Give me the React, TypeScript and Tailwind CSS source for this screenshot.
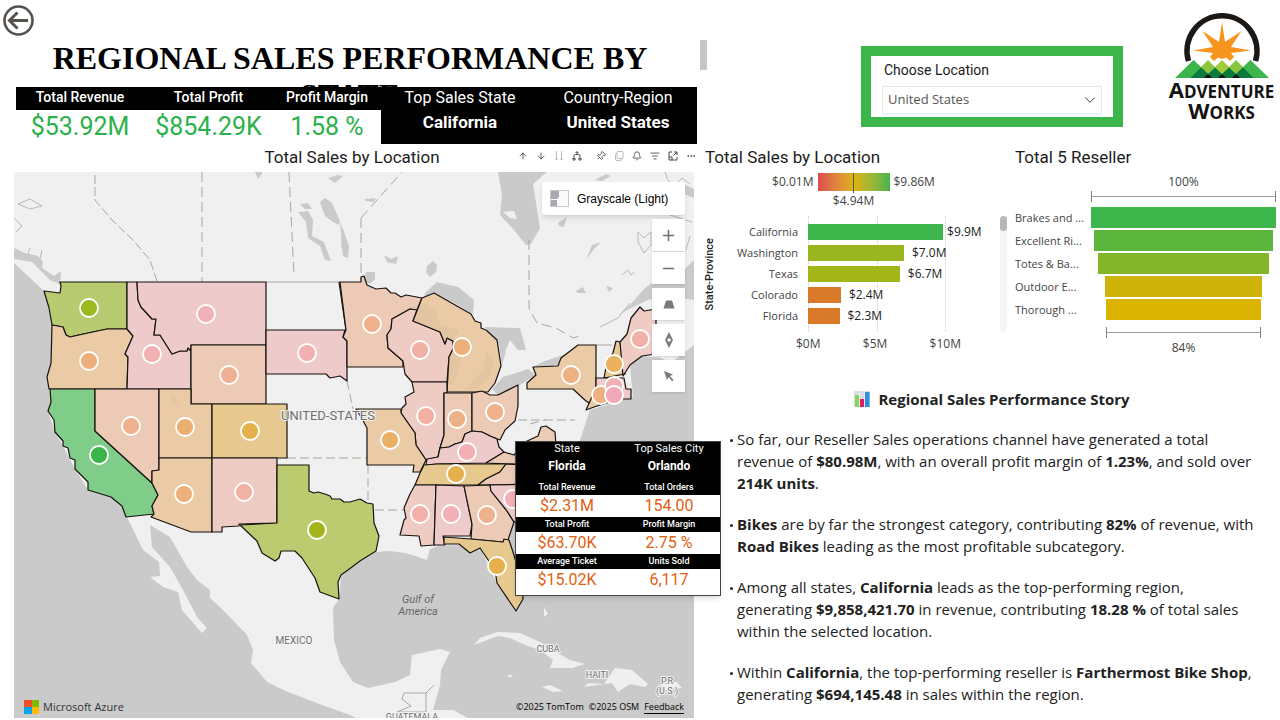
import React from "react";
import {
  ArrowDown,
  ArrowUp,
  Bell,
  ChevronDown,
  Copy,
  Ellipsis,
  Expand,
  ListFilter,
  Minus,
  Network,
  Pin,
  Plus,
} from "lucide-react";

type Region = { name: string; d: string; fill: string; dot?: string; x?: number; y?: number };

const PINK = "#efcaca";
const ROSE = "#eecbc3";
const PEACH = "#eccab5";
const SAND = "#ebcba6";
const GOLD = "#e7c98f";

const regions: Region[] = [
  { name: "Washington", fill: "#b8cb70", dot: "#9cb91f", x: 89, y: 308, d: "44,291 60,293 61,286 60,282 127,282 127,329 107,329 88,333 70,337 66,335 63,327 52,325 49,308" },
  { name: "Oregon", fill: SAND, dot: "#ecb07c", x: 89, y: 361, d: "52,325 63,327 66,335 70,337 88,333 107,329 127,329 133,336 125,354 128,357 127,389 49,389 47,377 51,363" },
  { name: "Idaho", fill: PINK, dot: "#f2b0b2", x: 152, y: 354, d: "127,282 137,282 138,300 141,307 152,319 156,319 154,335 160,335 172,354 180,351 187,351 188,348 191,351 191,389 127,389 128,357 125,354 133,336 127,329" },
  { name: "Montana", fill: PINK, dot: "#f2b0b8", x: 206, y: 314, d: "137,282 266,282 266,345 191,345 191,351 188,348 187,351 180,351 172,354 160,335 154,335 156,319 152,319 141,307 138,300" },
  { name: "Wyoming", fill: PEACH, dot: "#efb093", x: 229, y: 375, d: "191,345 266,345 266,404 191,404" },
  { name: "South Dakota", fill: PINK, dot: "#f2b0b0", x: 307, y: 353, d: "266,330 345,330 343,337 347,341 347,381 340,376 330,378 326,374 266,374" },
  { name: "California", fill: "#80cd8a", dot: "#3ab54a", x: 99, y: 455, d: "50,389 95,389 95,431 152,483 158,495 152,506 154,514 126,517 122,506 111,497 88,490 88,482 75,469 75,460 70,458 68,448 63,446 63,441 55,432 54,420 48,411 51,402" },
  { name: "Nevada", fill: PEACH, dot: "#efb08c", x: 131, y: 426, d: "95,389 159,389 159,470 152,471 152,483 95,431" },
  { name: "Utah", fill: SAND, dot: "#ebb070", x: 185, y: 427, d: "159,389 191,389 191,404 212,404 212,458 159,458" },
  { name: "Colorado", fill: GOLD, dot: "#e4b14c", x: 250, y: 431, d: "212,404 287,404 287,458 212,458" },
  { name: "Arizona", fill: SAND, dot: "#ecb07c", x: 184, y: 494, d: "159,458 212,458 212,532 191,532 151,517 154,514 152,506 158,495 152,483 152,471 159,470" },
  { name: "New Mexico", fill: ROSE, dot: "#f1b1a5", x: 244, y: 492, d: "212,458 277,458 277,523 239,524 239,526 222,527 222,532 212,532" },
  { name: "Texas", fill: "#bccb70", dot: "#a4b51c", x: 317, y: 530, d: "277,465 309,465 309,491 314,493 318,492 325,494 330,496 332,499 340,499 344,502 350,502 360,499 367,503 373,504 374,523 379,536 376,551 360,561 348,570 341,575 338,582 339,599 320,592 315,578 302,558 295,551 281,551 279,558 275,561 262,553 257,541 240,525 277,523" },
  { name: "Minnesota", fill: PEACH, dot: "#efb08c", x: 372, y: 324, d: "340,282 361,282 361,277 364,276 367,285 376,289 386,288 391,293 395,293 401,297 406,295 422,298 417,310 410,309 392,319 391,329 387,335 388,348 403,361 403,367 347,367 347,341 343,337 346,330" },
  { name: "Wisconsin", fill: ROSE, dot: "#f1b0a5", x: 420, y: 350, d: "417,310 410,309 392,319 391,329 387,335 388,348 403,361 405,374 412,382 447,382 449,357 453,349 453,341 447,338 445,344 440,332 413,321" },
  { name: "Michigan", fill: SAND, dot: "#edb07b", x: 462, y: 347, d: "422,298 434,293 471,314 475,321 481,323 481,328 486,330 497,340 501,366 495,383 488,392 447,392 449,357 453,349 453,341 447,338 445,344 440,332 413,321" },
  { name: "Illinois", fill: ROSE, dot: "#f1b0a0", x: 426, y: 416, d: "412,382 447,382 447,393 444,393 444,435 440,448 438,457 426,460 416,445 415,433 401,413 402,408 406,404 405,397 414,392" },
  { name: "Indiana", fill: PEACH, dot: "#eeb087", x: 457, y: 419, d: "444,393 472,393 472,431 465,434 462,442 455,444 449,447 440,448 444,435" },
  { name: "Ohio", fill: PEACH, dot: "#efb08c", x: 495, y: 412, d: "472,393 482,391 490,395 498,395 518,385 518,406 515,421 505,430 500,440 490,436 482,432 472,431" },
  { name: "Kentucky", fill: PINK, dot: "#f2b0b4", x: 467, y: 452, d: "472,431 482,432 490,436 497,439 499,447 504,452 486,463 437,464 426,465 427,459 438,457 440,448 449,447 455,444 462,442 465,434" },
  { name: "Virginia", fill: PEACH, d: "486,463 504,452 514,455 525,442 538,436 541,427 546,426 555,432 556,445 556,466" },
  { name: "Tennessee", fill: GOLD, dot: "#e4b14c", x: 456, y: 474, d: "424,465 437,464 506,464 500,472 486,479 478,485 415,485 420,473" },
  { name: "North Carolina", fill: PEACH, d: "506,464 556,466 556,484 478,485 486,479 500,472" },
  { name: "Mississippi", fill: ROSE, dot: "#f2b0a8", x: 420, y: 514, d: "415,485 436,485 434,545 421,546 419,536 400,535 404,520 406,518 404,508 410,494" },
  { name: "Alabama", fill: PINK, dot: "#f2b0b6", x: 451, y: 514, d: "436,485 464,486 468,505 472,524 470,536 443,536 445,545 434,545" },
  { name: "Georgia", fill: PEACH, dot: "#efb08c", x: 487, y: 515, d: "464,486 490,485 491,491 507,511 514,522 508,540 503,542 471,539 472,524 468,505" },
  { name: "South Carolina", fill: PINK, dot: "#f2b0b6", x: 513, y: 499, d: "490,485 540,484 540,505 514,522 507,511 491,491" },
  { name: "Florida", fill: GOLD, dot: "#e8b04c", x: 497, y: 566, d: "444,537 471,539 503,542 504,539 509,540 513,552 523,585 523,599 516,611 497,583 495,570 480,548 470,553 459,544 444,544" },
  { name: "Missouri", fill: SAND, dot: "#e9b068", x: 390, y: 440, d: "356,409 401,409 401,413 415,433 416,445 426,460 420,472 413,472 414,465 367,465 367,428 361,417" },
  { name: "New York", fill: SAND, dot: "#eeb080", x: 571, y: 375, d: "527,389 527,383 536,375 533,367 558,366 561,358 578,345 596,345 596,395 592,405 586,401 573,389" },
  { name: "New Hampshire", fill: GOLD, dot: "#ebb060", x: 614, y: 364, d: "616,341 620,342 623,362 625,374 604,378 607,362 613,353" },
  { name: "Maine", fill: ROSE, dot: "#f1b1a8", x: 640, y: 339, d: "620,342 627,334 631,318 640,307 644,311 656,309 656,354 642,356 630,365 623,376" },
  { name: "Connecticut", fill: SAND, dot: "#eeb080", x: 601, y: 395, d: "596,388 612,388 613,401 594,407 586,410" },
  { name: "Rhode Island", fill: PINK, dot: "#f2b0b4", x: 614, y: 386, d: "596,378 624,378 626,389 631,389 631,399 612,399 612,388 596,388" },
  { name: "Massachusetts", fill: PINK, dot: "#f2a8b6", x: 614, y: 395, d: "612,388 618,388 618,399 612,399" },
];

function BaseMap() {
  return (
    <svg
      viewBox="14 172 680 546"
      preserveAspectRatio="xMidYMid slice"
      className="block h-full w-full font-[Roboto,sans-serif]"
      role="img"
      aria-label="Map of total sales by state"
    >
      <rect x="-400" y="0" width="1600" height="900" fill="#cacaca" />
      <path
        d="M-400 0H1100V300L694 345 672 362 660 358 642 356 630 366 633 397 615 402 590 410 580 440 575 470 556 490 530 505 514 522 509 540 513 552 523 585 516 611 497 583 480 548 470 553 459 545 438 546 430 549 427 560 418 557 405 553 390 551 376 552 360 562 341 576 339 599 333 608 334 640 340 662 353 682 368 688 395 682 410 675 412 655 440 649 450 652 441 670 440 685 433 710 453 710 468 718 470 740H400L350 715 322 705 288 692 267 682 251 663 253 650 247 635 223 610 210 598 210 590 197 580 187 567 170 537 150 525 152 547 170 567 183 590 197 617 207 628 202 633 182 610 178 592 163 587 150 577 160 576 159 562 143 550 127 517 122 506 111 497 88 490 75 469 63 446 55 432 48 411 51 402 47 377 51 363 52 325 44 291 14 263-400 200Z"
        fill="#f0f0f0"
      />
      <g fill="#cacaca">
        <path d="M14 248 25 253 38 256 43 262 42 268 54 276 61 271 60 284 50 280 40 270 32 262 14 259Z" />
        <path d="M498 172H547L533 184 540 228 531 244 526 245 514 230 500 215 502 195Z" />
        <path d="M425 293 437 282 458 287 474 300 473 314 456 304 434 293 424 298Z" />
        <path d="M485 327 520 328 526 350 518 350 510 340 506 350 502 366 499 345Z" />
        <path d="M492 389 503 377 528 369 536 375 520 385 498 395Z" />
        <path d="M534 366 545 361 566 354 561 358 558 366Z" />
        <path d="M694 260 676 278 655 280 643 290 630 305 620 314 635 306 648 300 665 296 694 300Z" />
        <path d="M255 172 258 179 262 174V172ZM320 202 325 198 332 203 340 221 339 225 333 222 325 216ZM298 212 308 211 313 220 312 236 324 242 331 261 325 260 320 246 308 238 306 222ZM300 204 308 203 312 209 305 209ZM343 228 348 250 344 258 341 245ZM328 178 338 175 343 176 335 183Z" />
        <path d="M340 222 344 232 349 246 348 258 343 256ZM384 255 391 259 398 256 396 264 387 262ZM427 266 433 261 437 265 436 272 430 277 426 272ZM364 199 376 198 374 202 366 201ZM366 272 375 272 375 279 370 284 364 281ZM606 286 613 288 609 292ZM586 260 592 245 601 242 594 249 588 257ZM576 291 583 287 586 293 577 293ZM558 223 567 217 564 227 559 226ZM595 180 606 174 611 176 602 181Z" />
        <path d="M668 187 684 184 694 189V198L684 194Z" />
      </g>
      <path d="M503 212 514 211 517 219 510 218Z" fill="#f0f0f0" />
      <g fill="#efefef">
        <path d="M474 645 480 638 497 632 520 633 540 642 556 652 570 660 585 664 572 668 550 668 553 660 540 650 525 645 510 638 498 636Z" />
        <path d="M615 668 632 670 648 684 645 687 630 684 618 692 612 683 584 687 588 683 604 684 608 678Z" />
        <path d="M542 687 550 685 563 691 553 692ZM544 607 548 614 544 617ZM660 684 677 682 682 688 664 690ZM507 675 513 675 510 678Z" />
      </g>
      <g fill="none" stroke="#a9a6a1" strokeWidth="1">
        <path d="M95 175V200L112 220 133 240 150 260 157 281" strokeDasharray="9 3" />
        <path d="M202 172V282M289 172 294 276M361 218V280M361 218 402 172M529 240V308L537 323 556 328 573 338 583 335" strokeDasharray="10 5" />
        <path d="M266 282H340M596 345H612" />
        <path d="M287 458H367M368 465V510H405M518 420H575M530 424 545 420M347 381 353 409M366 502V510" strokeDasharray="9 4" />
        <path d="M18 204 30 199 42 206 30 209ZM14 218 22 226 16 232M30 248 28 255M42 250 40 259M638 232 644 238 651 232V245L644 253 638 242ZM622 275 628 270 631 275 634 272M600 327 618 318 630 303M665 172 668 180 674 186 682 178 690 184M673 200 670 215 692 222M690 236 686 250" stroke="#b8b8b6" />
        <path d="M404 693H426V712H397L411 706 402 699ZM426 693 434 685" />
      </g>
      <g stroke="#15120f" strokeWidth="1.2" strokeLinejoin="round">
        <path d="M339 282 346 330" fill="none" />
        {regions.map((r) => (
          <polygon key={r.name} points={r.d} fill={r.fill} />
        ))}
      </g>
      <g fill="#8a7a60" fillOpacity="0.08">
        <path d="M405 309 425 303 436 312 440 326 460 330 452 340 448 337 445 344 440 332 413 321 417 310ZM449 357 453 350 462 356 458 372 452 386 447 382ZM486 350 494 362 490 376 478 388 466 390 474 380 484 368Z" />
        <path d="M170 396 175 397 180 406 173 404Z" />
      </g>
      <g stroke="#fff" strokeWidth="1.8">
        {regions
          .filter((r) => r.dot)
          .map((r) => (
            <circle key={r.name} cx={r.x} cy={r.y} r="9" fill={r.dot} />
          ))}
      </g>
      <g fill="#6e6e6e" stroke="#f4f4f4" strokeWidth="2" paintOrder="stroke" textAnchor="middle">
        <text x="328" y="420" fontSize="13">UNITED-STATES</text>
        <text x="294" y="644" fontSize="10">MEXICO</text>
        <text x="548" y="652" fontSize="9">CUBA</text>
        <text x="597" y="678" fontSize="9">HAITI</text>
        <text x="667" y="684" fontSize="9">P.R</text>
        <text x="667" y="694" fontSize="9">(U.S.)</text>
        <text x="412" y="720" fontSize="9">GUATEMALA</text>
      </g>
      <g fill="#666" fontSize="11" fontStyle="italic" textAnchor="middle">
        <text x="418" y="603">Gulf of</text>
        <text x="418" y="615">America</text>
      </g>
    </svg>
  );
}

const kpis = [
  { label: "Total Revenue", value: "$53.92M" },
  { label: "Total Profit", value: "$854.29K" },
  { label: "Profit Margin", value: "1.58 %" },
];

const leaders = [
  { label: "Top Sales State", value: "California" },
  { label: "Country-Region", value: "United States" },
];

const tipRows = [
  [["Total Revenue", "$2.31M"], ["Total Orders", "154.00"]],
  [["Total Profit", "$63.70K"], ["Profit Margin", "2.75 %"]],
  [["Average Ticket", "$15.02K"], ["Units Sold", "6,117"]],
];

function StateTooltip() {
  return (
    <div className="absolute top-[269px] left-[501px] z-10 w-[206px] border border-[#444] bg-white pb-1 text-center shadow-md">
      <div className="grid h-[38px] grid-cols-2 bg-black text-white">
        {[["State", "Florida"], ["Top Sales City", "Orlando"]].map(([k, v]) => (
          <div key={k}>
            <div className="text-[11px] leading-[14px]">{k}</div>
            <div className="text-xs leading-[20px] font-bold">{v}</div>
          </div>
        ))}
      </div>
      {tipRows.map((row) => (
        <div key={row[0][0]} className="grid grid-cols-2">
          {row.map(([k, v]) => (
            <div key={k}>
              <div className="bg-black text-[9px] leading-[15px] font-medium text-white">{k}</div>
              <div className="text-base leading-[22px] text-[#e2600f]">{v}</div>
            </div>
          ))}
        </div>
      ))}
    </div>
  );
}

function MapControls() {
  const btn = "flex h-8 w-[33px] items-center justify-center bg-white text-[#6b6f78] shadow-sm";
  return (
    <>
      <button className="absolute top-[10px] right-[9px] flex h-[33px] w-[143px] items-center gap-2 rounded-[3px] bg-white pl-2 font-['Liberation_Sans',sans-serif] text-xs text-black shadow-md">
        <svg width="19" height="17" viewBox="0 0 19 17" aria-hidden="true">
          <rect x="0.5" y="0.5" width="18" height="16" fill="#fafafa" stroke="#c9c9cf" />
          <path d="M1 1H9V7L7 9H1ZM1 10H7V16H1Z" fill="#a9a9b3" />
        </svg>
        Grayscale (Light)
      </button>
      <div className="absolute top-[47px] right-[9px] flex flex-col gap-1">
        <div className="flex flex-col gap-px">
          <button className={btn} aria-label="Zoom in"><Plus size={17} strokeWidth={2.2} /></button>
          <button className={btn} aria-label="Zoom out"><Minus size={17} strokeWidth={2.2} /></button>
        </div>
        <button className={btn} aria-label="Pitch">
          <svg width="12" height="9" viewBox="0 0 12 9" aria-hidden="true"><path d="M3 0.5H9L11.5 8.5H0.5Z" fill="#777b80" /></svg>
        </button>
        <button className={btn} aria-label="Rotate">
          <svg width="10" height="16" viewBox="0 0 10 16" aria-hidden="true">
            <path d="M5 0 9 8 5 16 1 8Z" fill="#777b80" />
            <circle cx="5" cy="8" r="1.8" fill="#fff" />
          </svg>
        </button>
        <button className={btn} aria-label="Select">
          <svg width="12" height="12" viewBox="0 0 12 12" aria-hidden="true"><path d="M1 1 10 4.5 7 6 10.5 10 9 11.2 5.8 7 4 10Z" fill="#777b80" /></svg>
        </button>
      </div>
    </>
  );
}

function Toolbar() {
  const b = "flex h-5 w-[18px] items-center justify-center text-[#444]";
  const s = { size: 10, strokeWidth: 2 };
  return (
    <div className="flex justify-end">
      <button className={b} aria-label="Drill up"><ArrowUp {...s} /></button>
      <button className={b} aria-label="Drill down"><ArrowDown {...s} /></button>
      <button className={b} aria-label="Next level">
        <svg width="10" height="10" viewBox="0 0 10 10" fill="none" stroke="#bbb" aria-hidden="true"><path d="M2.5 0V9M1 7.5 2.5 9 4 7.5M7.5 0V9M6 7.5 7.5 9 9 7.5" /></svg>
      </button>
      <button className={b} aria-label="Expand hierarchy">
        <svg width="10" height="10" viewBox="0 0 10 10" fill="none" stroke="currentColor" aria-hidden="true">
          <path d="M2 6V5A1.5 1.500 0 0 1 3.500 3.500H6.500A1.500 1.500 0 0 1 8 5V6M5 1V3.500M3.500 2 5 0.500 6.500 2" />
          <path d="M1 7H3V9H1ZM7 7H9V9H7Z" />
        </svg>
      </button>
      <button className="ml-1.5 flex h-5 w-[18px] items-center justify-center text-[#444]" aria-label="Pin"><Pin {...s} className="rotate-45" /></button>
      <button className="flex h-5 w-[18px] items-center justify-center text-[#bbb]" aria-label="Copy">
        <svg width="10" height="10" viewBox="0 0 10 10" fill="none" stroke="currentColor" aria-hidden="true">
          <rect x="3" y="0.5" width="6" height="7" rx="1" />
          <path d="M3 2.500A1.500 1.500 0 0 0 1.500 4V8A1.500 1.500 0 0 0 3 9.500H6A1.500 1.500 0 0 0 7.500 8" />
        </svg>
      </button>
      <button className={b} aria-label="Alerts"><Bell {...s} /></button>
      <button className={b} aria-label="Filters"><ListFilter {...s} /></button>
      <button className={b} aria-label="Focus mode">
        <svg width="10" height="10" viewBox="0 0 10 10" fill="none" stroke="currentColor" aria-hidden="true">
          <path d="M4 1H1V9H9V6M6 1H9V4M9 1 5.500 4.500M1 6H4V9" />
        </svg>
      </button>
      <button className={b} aria-label="More options"><Ellipsis {...s} /></button>
    </div>
  );
}

function Logo() {
  return (
    <div className="flex w-[107px] flex-col items-center font-['Open_Sans',sans-serif] font-bold text-[#15120f]">
      <svg width="94" height="67" viewBox="0 0 94 67" aria-hidden="true">
        <path d="M13.500 49A35 35 0 1 1 80.500 49" fill="none" stroke="#1c1816" strokeWidth="5.500" />
        <path
          d="M47 10 50 30 66.500 19 56 35 76 38.500 56 41 59 45 55 49 51 45.500 47 47 43 45.500 39 49 35 45 38 41 18 38.500 38 35 27.500 19 44 30Z"
          fill="#f7941d"
        />
        <path d="M0 66 18.500 48 37 66ZM57 66 75.500 48 94 66Z" fill="#3cb54a" />
        <path d="M33 48 47 62 51 66H15ZM61 48 79 66H43Z" fill="#8cc63f" />
        <path d="M47 48 65 66H29Z" fill="#a1cc3a" />
        <path d="M15 66 26 55.500 33 62 40 55.500 47 62 54 55.500 61 62 68 55.500 79 66Z" fill="#0b7a3e" />
        <path d="M26 55.500 18.500 48 15 66ZM68 55.500 75.500 48 79 66Z" fill="#3cb54a" />
        <path d="M18 64 26 55.500 33 62 30 66H16ZM76 64 68 55.500 61 62 64 66H78Z" fill="#0b7a3e" />
        <path d="M33 62 37 66H29ZM47 62 51 66H43ZM61 62 65 66H57Z" fill="#15120f" />
      </svg>
      <div className="text-[17px] leading-[20px] whitespace-nowrap"><span className="text-[22px] leading-[20px]">A</span>DVENTURE</div>
      <div className="text-[17px] leading-[17px] whitespace-nowrap"><span className="text-[22px] leading-[17px]">W</span>ORKS</div>
    </div>
  );
}

const stateBars = [
  { name: "California", value: 9.86, label: "$9.9M", color: "#3cb54a" },
  { name: "Washington", value: 7.0, label: "$7.0M", color: "#99b51f" },
  { name: "Texas", value: 6.7, label: "$6.7M", color: "#a2b519" },
  { name: "Colorado", value: 2.4, label: "$2.4M", color: "#d87a2a" },
  { name: "Florida", value: 2.3, label: "$2.3M", color: "#d87a2a" },
];

function StateChart() {
  return (
    <section className="pr-2">
      <h2 className="pt-0.5 pl-px text-[17px] leading-[22px]">Total Sales by Location</h2>
      <div className="font-['Open_Sans',sans-serif] text-xs text-[#444]">
        <div className="mt-1 mr-1 flex items-center justify-center gap-1 pt-px">
          <span>$0.01M</span>
          <span className="flex h-[18px] w-[72px] justify-center bg-linear-to-r from-[#dc4a4e] via-[#dcb400] to-[#3cb54a]">
            <span className="h-5 w-px bg-[#555]" />
          </span>
          <span>$9.86M</span>
        </div>
        <div className="mr-1 text-center leading-[19px]">$4.94M</div>
        <div className="mt-[6px] flex">
          <div className="flex h-[116px] w-3 items-center justify-center">
            <span className="rotate-180 font-[Roboto,sans-serif] text-[11px] leading-3 font-medium text-[#222] [writing-mode:vertical-rl]">State-Province</span>
          </div>
          <div className="w-[82px] pt-[5px] text-right text-[11px]">
            {stateBars.map((b) => (
              <div key={b.name} className="h-[21px] leading-[21px]">{b.name}</div>
            ))}
          </div>
          <div className="ml-[10px] flex-1">
            <div className="relative h-[116px] pt-[5px]">
              <div className="absolute inset-y-0 left-0 flex w-[138px] justify-between">
                <i className="border-l border-dotted border-[#ccc]" />
                <i className="border-l border-dotted border-[#ccc]" />
                <i className="border-l border-dotted border-[#ccc]" />
              </div>
              {stateBars.map((b) => (
                <div key={b.name} className="relative flex h-[21px] items-center gap-2 text-[#222]">
                  <div className="h-4" style={{ width: `${b.value * 13.7}px`, backgroundColor: b.color }} />
                  <span className={b.value > 9 ? "-ml-1" : ""}>{b.label}</span>
                </div>
              ))}
            </div>
            <div className="-ml-3 flex w-[165px] justify-between leading-[24px]">
              <span>$0M</span>
              <span>$5M</span>
              <span>$10M</span>
            </div>
          </div>
          <div className="h-[116px] w-[7px] rounded-full bg-[#f5f5f5]">
            <div className="h-[15px] rounded-full bg-[#b8b8b8]" />
          </div>
        </div>
      </div>
    </section>
  );
}

const resellers = [
  { name: "Brakes and ...", share: 100, color: "#3cb54a" },
  { name: "Excellent Ri...", share: 97, color: "#5cb63c" },
  { name: "Totes & Ba...", share: 92, color: "#84b428" },
  { name: "Outdoor E...", share: 85, color: "#ceb40a" },
  { name: "Thorough ...", share: 84, color: "#dab400" },
];

function Bracket({ share }: { share: number }) {
  return (
    <div className="mx-auto flex h-[11px] items-center border-x border-[#8a7f7c]" style={{ width: `${share}%` }}>
      <div className="h-px w-full bg-[#a59c99]" />
    </div>
  );
}

function ResellerChart() {
  return (
    <section className="pr-1">
      <h2 className="pt-0.5 text-[17px] leading-[22px]">Total 5 Reseller</h2>
      <div className="grid grid-cols-[76px_1fr] font-['Open_Sans',sans-serif] text-xs text-[#444]">
        <div className="pt-[39px] text-[11px]">
          {resellers.map((r) => (
            <div key={r.name} className="mb-0.5 h-[21px] leading-[21px] whitespace-nowrap last:mb-0">{r.name}</div>
          ))}
        </div>
        <div>
          <div className="pt-[5px] text-center leading-[18px]">100%</div>
          <Bracket share={100} />
          <div className="flex flex-col items-center gap-0.5 pt-[5px]">
            {resellers.map((r) => (
              <div key={r.name} className="h-[21px]" style={{ width: `${r.share}%`, backgroundColor: r.color }} />
            ))}
          </div>
          <div className="mt-[7px]">
            <Bracket share={84} />
          </div>
          <div className="text-center leading-[20px]">84%</div>
        </div>
      </div>
    </section>
  );
}

function Story() {
  return (
    <section className="px-[22px] pt-[30px] font-['Open_Sans',sans-serif] text-[15px] leading-[22px] text-[#222]">
      <h2 className="mb-[18px] flex items-center justify-center gap-2 font-bold">
        <svg width="16" height="16" viewBox="0 0 16 16" aria-hidden="true">
          <rect width="16" height="16" rx="1" fill="#d9dbe2" />
          <path d="M0 4H16M0 8H16M0 12H16M5.500 0V16M10.500 0V16" stroke="#f4f4f8" strokeWidth="0.600" />
          <rect x="1" y="4" width="4" height="12" fill="#86d45a" />
          <rect x="6" y="8" width="4" height="8" fill="#d81e5b" />
          <rect x="11" y="1" width="4.500" height="15" fill="#2f8fe0" />
        </svg>
        Regional Sales Performance Story
      </h2>
      <ul className="flex flex-col gap-[19px]">
        <Item>So far, our Reseller Sales operations channel have generated a total<br />revenue of <b>$80.98M</b>, with an overall profit margin of <b>1.23%</b>, and sold over<br /><b>214K units</b>.</Item>
        <Item><b>Bikes</b> are by far the strongest category, contributing <b>82%</b> of revenue, with<br /><b>Road Bikes</b> leading as the most profitable subcategory.</Item>
        <Item>Among all states, <b>California</b> leads as the top-performing region,<br />generating <b>$9,858,421.70</b> in revenue, contributing <b>18.28 %</b> of total sales<br />within the selected location.</Item>
        <Item>Within <b>California</b>, the top-performing reseller is <b>Farthermost Bike Shop</b>,<br />generating <b>$694,145.48</b> in sales within the region.</Item>
      </ul>
    </section>
  );
}

function Item({ children }: { children: React.ReactNode }) {
  return (
    <li className="flex gap-1 pl-1 whitespace-nowrap">
      <span className="mt-[11px] h-[3px] w-[3px] shrink-0 rounded-full bg-[#222]" />
      <p>{children}</p>
    </li>
  );
}

export default function App() {
  return (
    <main className="grid min-h-screen grid-cols-[704fr_576fr] bg-white font-[Roboto,sans-serif] text-[#1c1c1c]">
      <div className="min-w-0">
        <div className="h-10 pt-[5px] pl-[3px]">
          <button aria-label="Back" className="block">
            <svg width="31" height="31" viewBox="0 0 31 31" fill="none" stroke="#55524e" aria-hidden="true">
              <circle cx="15.500" cy="15.500" r="14" strokeWidth="2.600" />
              <path d="M25 15.500H7M14.500 7.500 6.500 15.500 14.500 23.500" strokeWidth="3" />
            </svg>
          </button>
        </div>
        <div className="-mr-[3px] flex h-[47px] items-start overflow-hidden">
          <h1 className="flex-1 px-6 text-center font-['Liberation_Serif',serif] text-[32px] leading-[37px] font-bold text-black">
            REGIONAL SALES PERFORMANCE BY STATE
          </h1>
          <div className="h-[30px] w-[7px] bg-[#c6c6c6]" />
        </div>
        <div className="mr-[7px] ml-4 grid h-[57px] grid-cols-[128fr_129fr_108fr_158fr_158fr] text-center">
          {kpis.map((k) => (
            <div key={k.label}>
              <div className="h-[23px] bg-black text-sm leading-5 font-medium text-white">{k.label}</div>
              <div className="text-[25px] leading-[34px] text-[#2bb14a]">{k.value}</div>
            </div>
          ))}
          {leaders.map((k) => (
            <div key={k.label} className="bg-black text-white">
              <div className="text-base leading-[21px]">{k.label}</div>
              <div className="text-[17px] leading-[29px] font-bold">{k.value}</div>
            </div>
          ))}
        </div>
        <div className="mr-1 ml-1 grid h-7 grid-cols-[1fr_auto_1fr] items-start pt-0.5">
          <span />
          <h2 className="text-[17px] leading-[22px]">Total Sales by Location</h2>
          <Toolbar />
        </div>
        <div className="relative mr-[10px] ml-[14px] h-[546px]">
          <BaseMap />
          <MapControls />
          <StateTooltip />
          <div className="absolute inset-x-[10px] bottom-0 flex items-center justify-between font-['Open_Sans',sans-serif] text-[#333]">
            <div className="flex items-center gap-1 text-[11px] leading-[22px]">
              <svg width="15" height="14" viewBox="0 0 15 14" aria-hidden="true">
                <path d="M0 0H8V7H0Z" fill="#f25022" />
                <path d="M8 0H15V7H8Z" fill="#7fba00" />
                <path d="M0 7H8V14H0Z" fill="#00a4ef" />
                <path d="M8 7H15V14H8Z" fill="#ffb900" />
              </svg>
              Microsoft Azure
            </div>
            <div className="flex gap-[5px] text-[9px] leading-[13px] text-black">
              <span>©2025 TomTom</span>
              <span>©2025 OSM</span>
              <a href="#feedback" className="border-b border-black">Feedback</a>
            </div>
          </div>
        </div>
      </div>

      <div className="min-w-0">
        <header className="flex h-36 items-start justify-end gap-[45px] pr-[5px]">
          <div className="mt-[46px] w-[262px] border-[10px] border-[#3cb54a] bg-white px-[11px] pt-[5px] pb-[3px]">
            <label htmlFor="location" className="block pl-0.5 text-sm leading-[18px]">Choose Location</label>
            <div className="relative mt-[7px]">
              <select
                id="location"
                className="h-7 w-full appearance-none border border-[#e6e6e6] bg-white px-[5px] font-['Open_Sans',sans-serif] text-[13px] text-[#555]"
              >
                <option>United States</option>
              </select>
              <ChevronDown size={18} strokeWidth={1.3} className="pointer-events-none absolute top-[5px] right-[3px] text-[#333]" />
            </div>
          </div>
          <div className="mt-3"><Logo /></div>
        </header>
        <div className="grid grid-cols-[311fr_265fr]">
          <StateChart />
          <ResellerChart />
        </div>
        <Story />
      </div>
    </main>
  );
}
